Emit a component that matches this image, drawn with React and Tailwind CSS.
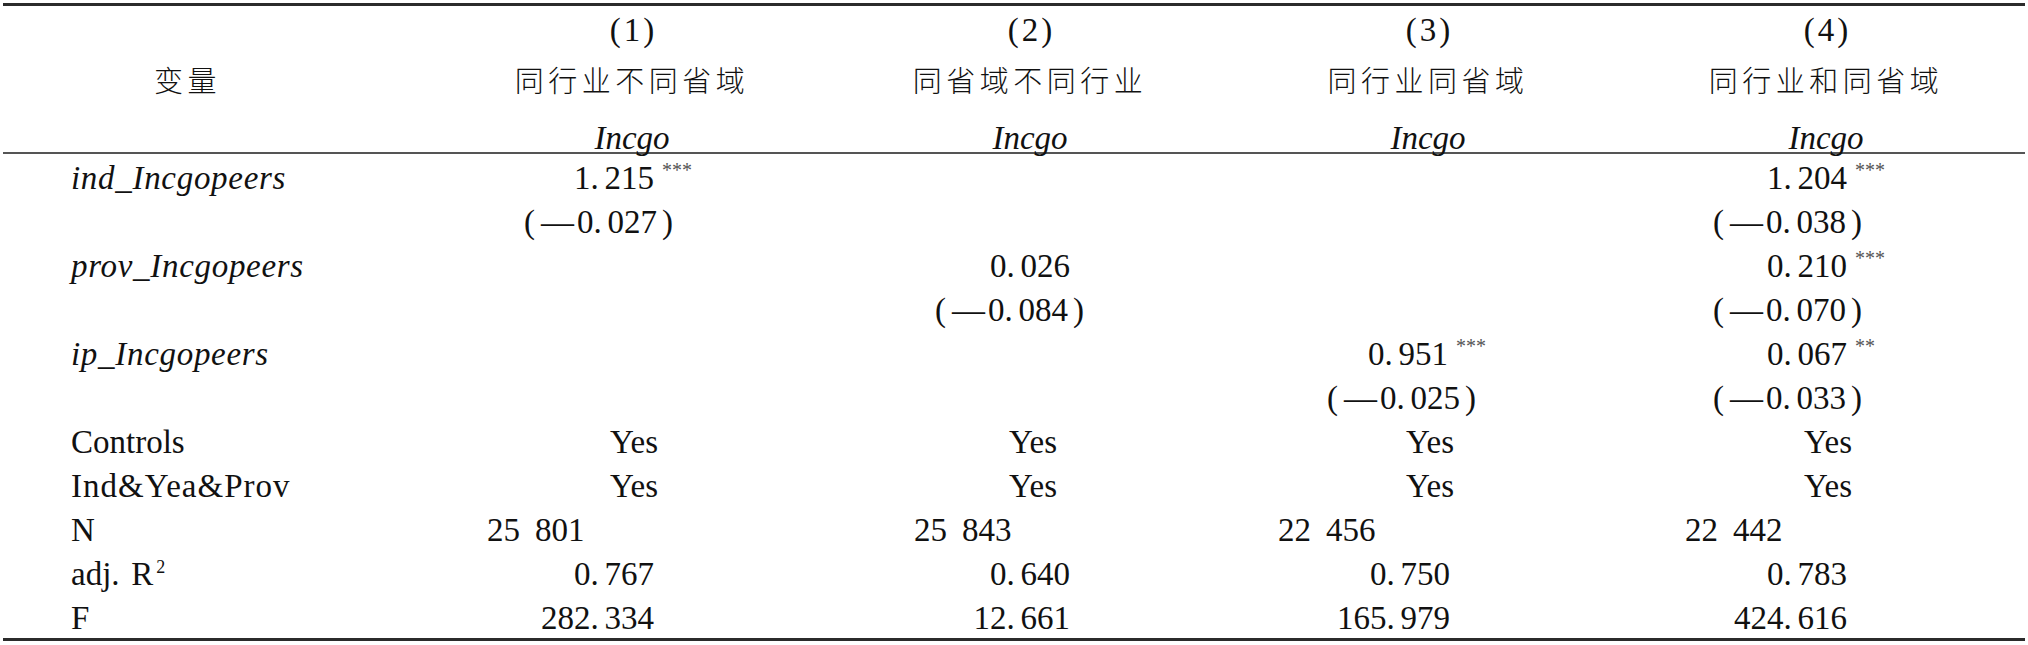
const serif = "font-['Liberation_Serif','Noto_Sans_CJK_SC',serif]"
const cjk = "font-['Noto_Sans_CJK_SC',sans-serif] font-light tracking-[4.5px]"
const grid = "grid grid-cols-[433px_398px_398px_398px_398px]"

// digits keep their own width, the period and the thousands gap get a slot as in the print
function Num({ v }) {
  return v.split('').map((ch, i) => {
    if (ch === '.') return <span key={i} className="inline-block w-[14px] text-left">.</span>
    if (ch === ' ') return <span key={i} className="inline-block w-[15px]"> </span>
    return <span key={i}>{ch}</span>
  })
}

function Coef({ v, stars }) {
  return (
    <>
      <Num v={v} />
      {stars && <span className="ml-[8px] text-[20px] leading-none align-super text-[#555]">{stars}</span>}
    </>
  )
}

function Se({ v }) {
  return (
    <>
      <span className="mr-[6px]">(</span>
      <span className="mr-[3px]">—</span>
      <Num v={v} />
      <span className="ml-[5px]">)</span>
    </>
  )
}

const rows = [
  {
    label: <i className="tracking-[0.7px]">ind_Incgopeers</i>,
    cells: [
      { box: 'w-[259px] text-right', c: <Coef v="1.215" stars="***" /> },
      null,
      null,
      { box: 'w-[258px] text-right', c: <Coef v="1.204" stars="***" /> }
    ]
  },
  {
    cells: [
      { box: 'w-[240px] text-right', c: <Se v="0.027" /> },
      null,
      null,
      { box: 'w-[235px] text-right', c: <Se v="0.038" /> }
    ]
  },
  {
    label: <i className="tracking-[0.7px]">prov_Incgopeers</i>,
    cells: [
      null,
      { box: 'w-[239px] text-right', c: <Coef v="0.026" /> },
      null,
      { box: 'w-[258px] text-right', c: <Coef v="0.210" stars="***" /> }
    ]
  },
  {
    cells: [
      null,
      { box: 'w-[253px] text-right', c: <Se v="0.084" /> },
      null,
      { box: 'w-[235px] text-right', c: <Se v="0.070" /> }
    ]
  },
  {
    label: <i className="tracking-[0.7px]">ip_Incgopeers</i>,
    cells: [
      null,
      null,
      { box: 'w-[257px] text-right', c: <Coef v="0.951" stars="***" /> },
      { box: 'w-[248px] text-right', c: <Coef v="0.067" stars="**" /> }
    ]
  },
  {
    cells: [
      null,
      null,
      { box: 'w-[247px] text-right', c: <Se v="0.025" /> },
      { box: 'w-[235px] text-right', c: <Se v="0.033" /> }
    ]
  },
  {
    label: 'Controls',
    cells: [
      { box: 'w-[225px] text-right', c: 'Yes' },
      { box: 'w-[226px] text-right', c: 'Yes' },
      { box: 'w-[225px] text-right', c: 'Yes' },
      { box: 'w-[225px] text-right', c: 'Yes' }
    ]
  },
  {
    label: <span className="tracking-[1px]">Ind&amp;Yea&amp;Prov</span>,
    cells: [
      { box: 'w-[225px] text-right', c: 'Yes' },
      { box: 'w-[226px] text-right', c: 'Yes' },
      { box: 'w-[225px] text-right', c: 'Yes' },
      { box: 'w-[225px] text-right', c: 'Yes' }
    ]
  },
  {
    label: 'N',
    cells: [
      { box: 'pl-[54px]', c: <Num v="25 801" /> },
      { box: 'pl-[83px]', c: <Num v="25 843" /> },
      { box: 'pl-[49px]', c: <Num v="22 456" /> },
      { box: 'pl-[58px]', c: <Num v="22 442" /> }
    ]
  },
  {
    label: (
      <span>
        adj<span className="inline-block w-[20px] text-left">.</span>R
        <span className="ml-[3px] text-[18px] leading-none align-super">2</span>
      </span>
    ),
    cells: [
      { box: 'w-[221px] text-right', c: <Num v="0.767" /> },
      { box: 'w-[239px] text-right', c: <Num v="0.640" /> },
      { box: 'w-[221px] text-right', c: <Num v="0.750" /> },
      { box: 'w-[220px] text-right', c: <Num v="0.783" /> }
    ]
  },
  {
    label: 'F',
    cells: [
      { box: 'w-[221px] text-right', c: <Num v="282.334" /> },
      { box: 'w-[239px] text-right', c: <Num v="12.661" /> },
      { box: 'w-[221px] text-right', c: <Num v="165.979" /> },
      { box: 'w-[220px] text-right', c: <Num v="424.616" /> }
    ]
  }
]

const heads = [
  { n: '1', t: '同行业不同省域' },
  { n: '2', t: '同省域不同行业' },
  { n: '3', t: '同行业同省域' },
  { n: '4', t: '同行业和同省域' }
]

export default function App() {
  return (
    <div className={`w-[2028px] h-[645px] bg-white pt-[3px] text-[33px] text-[#111] ${serif}`}>
      <div className="h-[3px] mx-[3px] bg-[#2b2b2b]" />

      {/* header block */}
      <div className="pb-[8px]">
        <div className={`${grid} h-[40px] items-center`}>
          <div />
          {heads.map(h => (
            <div key={h.n} className="text-center">
              (<span className="mx-[3px]">{h.n}</span>)
            </div>
          ))}
        </div>
        <div className={`${grid} h-[68px] items-center`}>
          <div className={`pl-[154px] text-[29px] ${cjk}`}>变量</div>
          {heads.map(h => (
            <div key={h.n} className={`text-center text-[29px] ${cjk}`}>{h.t}</div>
          ))}
        </div>
        <div className={`${grid} h-[30px] items-center`}>
          <div />
          {heads.map(h => (
            <div key={h.n} className="text-center">
              <i>Incgo</i>
            </div>
          ))}
        </div>
      </div>

      <div className="h-[2px] mx-[3px] bg-[#555]" />

      {rows.map((row, i) => (
        <div key={i} className={`${grid} h-[44px] items-center whitespace-nowrap`}>
          <div className="pl-[71px]">{row.label}</div>
          {row.cells.map((cell, j) => (
            <div key={j}>{cell && <div className={cell.box}>{cell.c}</div>}</div>
          ))}
        </div>
      ))}

      <div className="h-[3px] mx-[3px] bg-[#2b2b2b]" />
    </div>
  )
}
